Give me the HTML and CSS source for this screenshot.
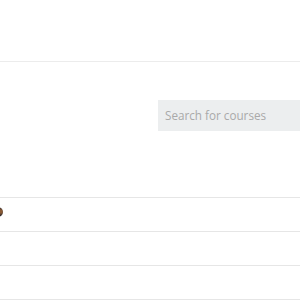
FILE: index.html
```html
<!DOCTYPE html>
<html>
<head>
<meta charset="utf-8">
<link rel="stylesheet" href="styles.css">
</head>
<body>
<header class="topbar"></header>
<section class="search-area">
  <div class="search-box">Search for courses</div>
</section>
<ul class="course-list">
  <li class="row"><span class="avatar"></span></li>
  <li class="row"></li>
  <li class="row"></li>
  <li class="row last"></li>
</ul>
</body>
</html>
```
FILE: styles.css
```css
html, body {
  margin: 0;
  padding: 0;
  background: #fff;
  font-family: "Open Sans", "Liberation Sans", sans-serif;
  overflow: hidden;
  height: 300px;
}
.topbar {
  height: 61px;
  border-bottom: 1px solid #ececec;
}
.search-area {
  display: flex;
  justify-content: flex-end;
  padding-top: 38px;
  height: 135px;
  box-sizing: border-box;
}
.search-box {
  width: 142px;
  height: 31px;
  background: #eceeef;
  color: #a9a9a9;
  font-size: 11.7px;
  line-height: 31px;
  padding-left: 7px;
  box-sizing: border-box;
}
.course-list {
  list-style: none;
  margin: 0;
  padding: 0;
}
.row {
  height: 33px;
  border-top: 1px solid #e6e6e6;
  display: flex;
  align-items: center;
}
.row.last {
  height: 1px;
}
.avatar {
  width: 10px;
  height: 10px;
  border-radius: 50%;
  margin-left: -7px;
  margin-top: -6px;
  background: radial-gradient(circle at 75% 45%, #8a5a34 0 15%, #2e2a2e 45%, #1c1c22 100%);
}
```
